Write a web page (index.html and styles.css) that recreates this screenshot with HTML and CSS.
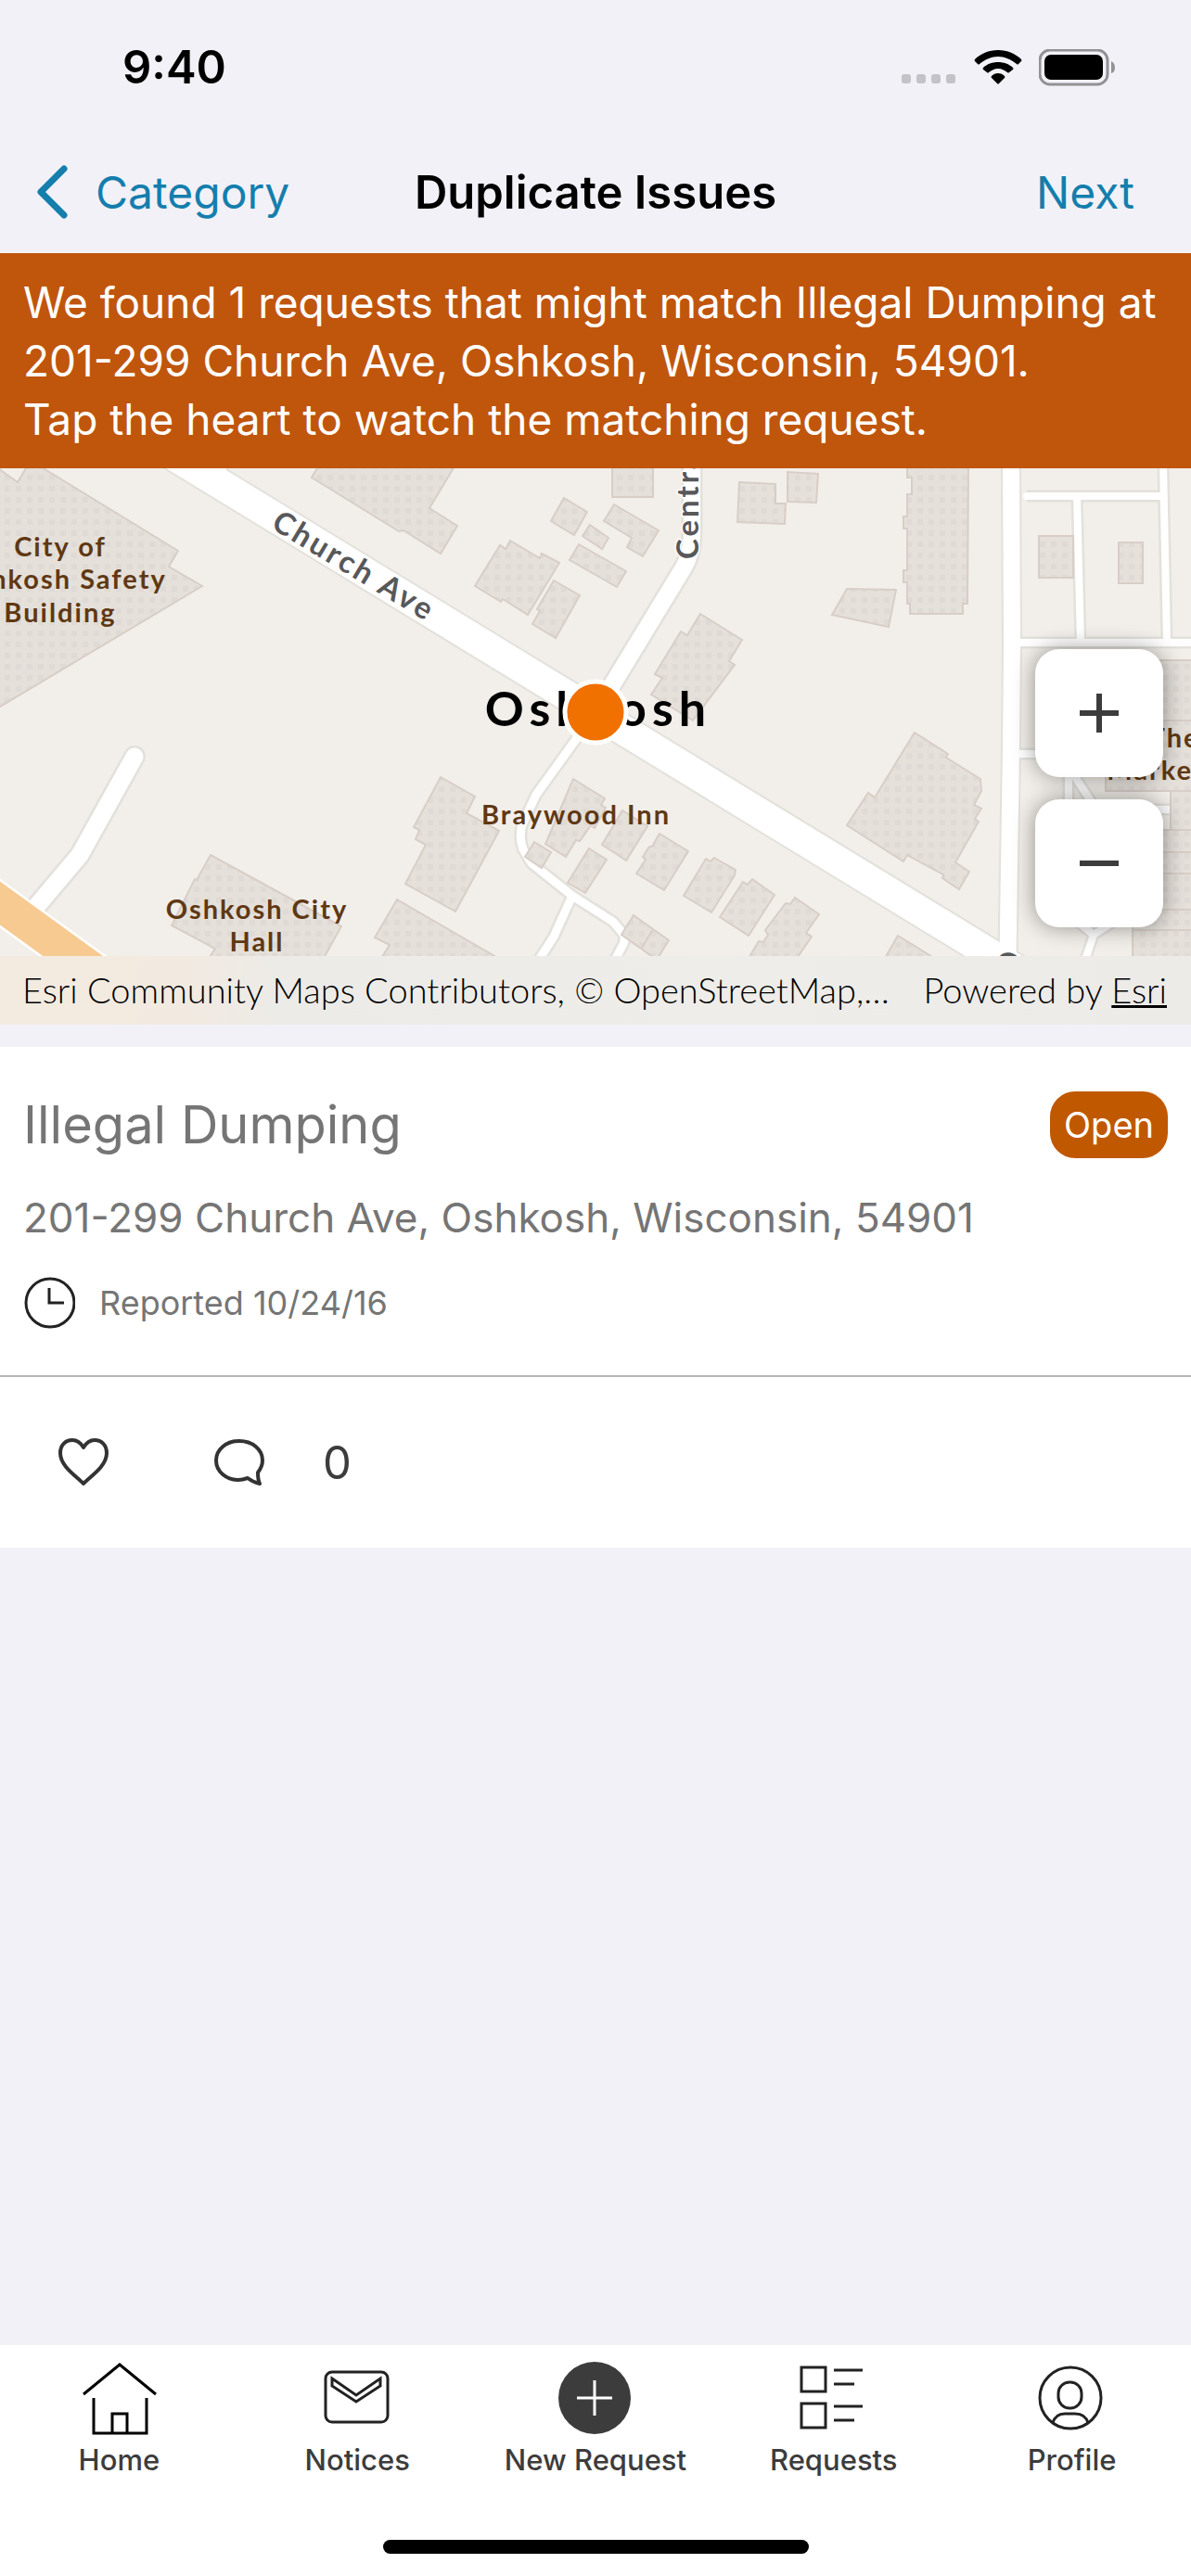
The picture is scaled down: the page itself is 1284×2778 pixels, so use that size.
FILE: index.html
```html
<!DOCTYPE html>
<html lang="en">
<head>
    <meta charset="UTF-8">
    <meta name="viewport" content="width=device-width, initial-scale=1.0">
    <title>Duplicate Issues</title>
    <link rel="stylesheet" href="styles.css">
</head>
<body>
    <div class="status-bar">
        <span class="time">9:40</span>
        <div class="status-icons">
            <svg width="60" height="12" viewBox="0 0 60 12" fill="#c3c3c7">
                <rect x="0" y="1" width="10" height="10" rx="3"/>
                <rect x="16" y="1" width="10" height="10" rx="3"/>
                <rect x="32" y="1" width="10" height="10" rx="3"/>
                <rect x="48" y="1" width="10" height="10" rx="3"/>
            </svg>
            <svg class="wifi" width="52" height="38" viewBox="0 0 52 38">
                <path d="M26 0C36 0 45 4 51 10Q52 11 51 12L48 15Q47 16 46 15C40 10 33 7 26 7S12 10 6 15Q5 16 4 15L1 12Q0 11 1 10C7 4 16 0 26 0Z"/>
                <path d="M26 13C32 13 38 15 42 19Q43 20 42 21L38 24Q37 25 36 24C33 22 30 20 26 20S19 22 16 24Q15 25 14 24L10 21Q9 20 10 19C14 15 20 13 26 13Z"/>
                <path d="M26 25C29 25 31 26 33 28Q34 29 33 30L27 36Q26 37 25 36L19 30Q18 29 19 28C21 26 23 25 26 25Z"/>
            </svg>
            <svg width="82" height="40" viewBox="0 0 82 40">
                <rect x="1" y="1" width="73" height="37" rx="11" fill="none" stroke="#929295" stroke-width="3"/>
                <rect x="6" y="6" width="63" height="27" rx="7"/>
                <path d="M78 13Q82 15 82 20T78 26Z" fill="#929295"/>
            </svg>
        </div>
    </div>

    <header class="nav-bar">
        <a class="back" href="#category">
            <svg width="34" height="58" viewBox="0 0 34 58" fill="none" stroke="#147ead" stroke-width="7" stroke-linecap="round" stroke-linejoin="round">
                <path d="M30 4L5 29L30 54"/>
            </svg>
            Category
        </a>
        <h1>Duplicate Issues</h1>
        <a class="next" href="#next">Next</a>
    </header>

    <div class="banner">
        <p>We found 1 requests that might match Illegal Dumping at 201-299 Church Ave, Oshkosh, Wisconsin, 54901.</p>
        <p>Tap the heart to watch the matching request.</p>
    </div>

    <section class="map">
        <svg class="map-canvas" viewBox="0 0 1284 600" preserveAspectRatio="xMidYMin slice">
            <defs>
                <pattern id="dots" width="12" height="12" patternUnits="userSpaceOnUse" x="5" y="7">
                    <rect width="12" height="12" fill="#e5e0da"/>
                    <rect width="6" height="6" fill="#dfdad5"/>
                </pattern>
            </defs>

            <!-- street casings -->
            <g class="casing">
                <path stroke-width="36" d="M100 -67L1150 574M228 14V-30"/>
                <path stroke-width="23" d="M746 -10V72Q745 94 737 107L650 250"/>
                <path stroke-width="14" d="M642 263L578 352L563 384Q559 398 564 411L573 426L617 461L661 489L672 502Q675 508 671 515L663 530M617 461L597 505L581 530"/>
                <path stroke-width="24" stroke-linecap="round" d="M145 311L86 417L38 474"/>
                <path stroke-width="22" d="M1090 -5L1091 190L1090 300L1086 560"/>
                <path stroke-width="13" d="M1107 30H1254M1161 30L1165 188M1254 -5L1258 188M1092 188H1290M1092 308H1152V368H1261M1154 325L1186 374M1150 480L1179 503L1215 480M1179 503L1170 530"/>
            </g>
            <!-- streets -->
            <g class="street">
                <path stroke-width="32" d="M100 -67L1150 574M228 14V-30"/>
                <path stroke-width="18" d="M746 -10V72Q745 94 737 107L650 250"/>
                <path stroke-width="9" d="M642 263L578 352L563 384Q559 398 564 411L573 426L617 461L661 489L672 502Q675 508 671 515L663 530M617 461L597 505L581 530"/>
                <path stroke-width="19" stroke-linecap="round" d="M145 311L86 417L38 474"/>
                <path stroke-width="18" d="M1090 -5L1091 190L1090 300L1086 560"/>
                <path stroke-width="8" stroke-linecap="round" d="M1107 30H1254M1161 30L1165 188M1254 -5L1258 188M1092 188H1290M1092 308H1152V368H1261M1154 325L1186 374M1150 480L1179 503L1215 480M1179 503L1170 530"/>
                <path stroke-width="43" d="M-40 440L120 556"/>
                <path class="highway" stroke-width="38" d="M-40 440L120 556"/>
            </g>

            <!-- buildings -->
            <g class="building">
                <path d="M-5 -2L19 15L28 0L40 -4L192 89L182 106L218 127L-5 260Z"/>
                <path d="M343 -2L336 10L430 68L435 67L475 92L493 62L463 43L490 -2Z"/>
                <path d="M608 32L633 47L619 72L594 57Z"/>
                <path d="M636 61L656 75L649 87L628 73Z"/>
                <path d="M662 39L710 67L693 95L676 85L681 75L651 57Z"/>
                <path d="M624 82L675 111L665 128L614 99Z"/>
                <path d="M550 78L582 97L584 92L603 102L569 158L542 141L540 144L512 127L539 83L545 87Z"/>
                <path d="M597 121L625 137L599 183L574 168L582 154L579 152Z"/>
                <path d="M660 -5H704V31H660Z"/>
                <path d="M797 15L836 17V38L847 38L846 60L795 58Z"/>
                <path d="M849 4L882 6L880 37L849 36Z"/>
                <path d="M755 157L800 185L786 208L792 212L747 272L702 244L714 226L706 222L734 176L741 180Z"/>
                <path d="M978 -5V10H983V28H978V52H974V65H978V110H974V123H978V146H981V157H1038V146H1043L1044 -5Z"/>
                <path d="M913 130L966 131L958 171L897 158Z"/>
                <path d="M1120 73H1157V118H1120Z"/>
                <path d="M1206 80H1232V124H1206Z"/>
                <path d="M986 285L1022 308L1020 312L1057 335L1058 348L1050 363L1058 367L1051 378L1055 381L1030 425L1045 435L1034 454L1016 442L1017 438L978 417L974 424L913 385L936 350L943 355Z"/>
                <path d="M857 463L883 481L869 501L875 505L858 530H806L818 510L823 511L828 503L825 498L847 469L852 470Z"/>
                <path d="M968 504L1010 530H953Z"/>
                <path d="M475 333L512 354L503 372L538 391L491 478L437 448L459 406L448 400L452 390L446 387Z"/>
                <path d="M618 335L652 356L648 363L653 366L641 388L637 385L625 402L621 401L610 419L588 405Z"/>
                <path d="M671 369L698 386L675 423L663 415L649 406Z"/>
                <path d="M711 394L742 413L716 455L686 437L696 422L693 419L700 408L703 408Z"/>
                <path d="M770 420L793 433L792 439L767 479L737 461L761 421L766 424Z"/>
                <path d="M811 443L835 460L807 504L776 484L801 446L806 449Z"/>
                <path d="M576 403L594 414L584 431L566 419Z"/>
                <path d="M635 410L654 422L631 458L612 447Z"/>
                <path d="M683 482L721 509L708 530L670 503ZM704 497L692 517"/>
                <path d="M428 465L540 530H410L420 514L404 506Z"/>
                <path d="M227 417L368 494L348 530H224L232 518L185 493L210 443L212 444Z"/>
                <path d="M1192 207H1290V348H1192ZM1192 272H1290"/>
                <path d="M1262 348H1290V390H1262Z"/>
                <path d="M1221 390H1290V530H1221ZM1221 414H1290M1221 437H1290M1221 476H1290M1221 498H1290"/>
            </g>

            <!-- labels -->
            <g class="place" text-anchor="middle">
                <text x="65" y="95">City of</text>
                <text x="65" y="130">Oshkosh Safety</text>
                <text x="65" y="166">Building</text>
                <text x="621" y="384">Braywood Inn</text>
                <text x="277" y="486">Oshkosh City</text>
                <text x="277" y="521">Hall</text>
                <text x="1266" y="301">The</text>
                <text x="1246" y="336">Market</text>
            </g>
            <g class="road-name">
                <text transform="translate(291 64) rotate(31)">Church Ave</text>
                <text transform="translate(753 98) rotate(-90)">Central Ave</text>
                <text transform="translate(1075 521) rotate(90)">C</text>
            </g>
            <text class="city" x="645" y="278" text-anchor="middle">Oshkosh</text>
            <circle cx="642" cy="263" r="33" fill="#f07000" stroke="#fff" stroke-width="5"/>
        </svg>

        <div class="zoom-controls">
            <button type="button" aria-label="Zoom in">
                <svg width="42" height="42" viewBox="0 0 42 42" fill="#3c3c3c"><path d="M18 0H24V18H42V24H24V42H18V24H0V18H18Z"/></svg>
            </button>
            <button type="button" aria-label="Zoom out">
                <svg width="42" height="42" viewBox="0 0 42 42" fill="#3c3c3c"><path d="M0 18H42V24H0Z"/></svg>
            </button>
        </div>

        <div class="attribution">
            <span>Esri Community Maps Contributors, © OpenStreetMap,…</span>
            <span>Powered by <a href="#esri">Esri</a></span>
        </div>
    </section>

    <article class="card">
        <div class="card-body">
            <div class="card-title">
                <h2>Illegal Dumping</h2>
                <span class="badge">Open</span>
            </div>
            <p class="address">201-299 Church Ave, Oshkosh, Wisconsin, 54901</p>
            <p class="reported">
                <svg width="56" height="56" viewBox="0 0 56 56" fill="none" stroke="#222" stroke-width="3">
                    <circle cx="29" cy="28" r="26"/>
                    <path d="M28 12V28H44"/>
                </svg>
                Reported 10/24/16
            </p>
        </div>
        <div class="card-actions">
            <button type="button" aria-label="Watch request">
                <svg width="56" height="56" viewBox="0 0 56 56" fill="none" stroke="#333" stroke-width="4" stroke-linejoin="round">
                    <path d="M28 51C22 44 3 33 3 18C3 9 9 4 16 4C21 4 25 7 28 12C31 7 35 4 40 4C47 4 53 9 53 18C53 33 34 44 28 51Z"/>
                </svg>
            </button>
            <button type="button" class="comments">
                <svg width="56" height="56" viewBox="0 0 56 56" fill="none" stroke="#333" stroke-width="4" stroke-linejoin="round">
                    <path d="M28 5C14 5 3 14 3 26S14 47 27 47C31 47 34 46 37 45C41 48 45 50 50 51C48 47 48 43 48 39C51 35 53 31 53 26C53 14 42 5 28 5Z"/>
                </svg>
                <span>0</span>
            </button>
        </div>
    </article>

    <nav class="tab-bar">
        <div class="tabs">
            <a href="#home">
                <svg width="84" height="84" viewBox="0 0 84 84" fill="none" stroke="#000" stroke-width="3">
                    <path d="M4 38L43 6L82 38M15 42V80H72V42M35 80V59H51V80"/>
                </svg>
                Home
            </a>
            <a href="#notices">
                <svg width="84" height="84" viewBox="0 0 84 84" fill="none" stroke="#222" stroke-width="3">
                    <rect x="8" y="14" width="67" height="54" rx="7"/>
                    <path d="M15 21L41 39L67 21V29L41 46L15 29Z"/>
                </svg>
                Notices
            </a>
            <a href="#new">
                <svg width="84" height="84" viewBox="0 0 84 84" fill="none">
                    <circle cx="41" cy="42" r="39" fill="#3c3c3c"/>
                    <path d="M22 42H60M41 23V61" stroke="#fff" stroke-width="3"/>
                </svg>
                New Request
            </a>
            <a href="#requests">
                <svg width="84" height="84" viewBox="0 0 84 84" fill="none" stroke="#222" stroke-width="3">
                    <path d="M7 9H33V35H7ZM7 48H33V74H7ZM42 12H73M42 27H64M42 51H73M42 66H64"/>
                </svg>
                Requests
            </a>
            <a href="#profile">
                <svg width="84" height="84" viewBox="0 0 84 84" fill="none" stroke="#222" stroke-width="3">
                    <circle cx="40" cy="42" r="33"/>
                    <rect x="27" y="25" width="25" height="28" rx="12"/>
                    <path d="M21 69C23 62 28 59 34 59H45C52 59 57 62 59 69"/>
                </svg>
                Profile
            </a>
        </div>
        <div class="home-indicator"></div>
    </nav>
</body>
</html>
```
FILE: styles.css
```css
* {
    box-sizing: border-box;
}

body {
    display: flex;
    flex-direction: column;
    min-height: 100vh;
    margin: 0;
    background-color: #f2f1f7;
    font-family: Inter, "Liberation Sans", sans-serif;
    color: #000;
}

h1, h2, p {
    margin: 0;
    font-weight: normal;
}

a {
    color: inherit;
    text-decoration: none;
}

button {
    padding: 0;
    border: none;
    background: none;
    font: inherit;
    color: inherit;
    cursor: pointer;
}

svg {
    display: block;
    flex-shrink: 0;
}

.status-bar {
    display: flex;
    justify-content: space-between;
    align-items: center;
    height: 141px;
    padding: 4px 82px 0 132px;
}

.time {
    font-size: 49px;
    font-weight: 600;
}

.status-icons {
    display: flex;
    align-items: center;
    gap: 18px;
}

.status-icons svg:first-child {
    margin-top: 24px;
}

.nav-bar {
    display: grid;
    grid-template-columns: 1fr auto 1fr;
    align-items: center;
    height: 132px;
    padding: 0 61px 0 39px;
    font-size: 48px;
}

.nav-bar h1 {
    margin-left: 22px;
    font-size: 49px;
    font-weight: 600;
}

.back, .next {
    color: #147ead;
}

.back {
    display: flex;
    align-items: center;
    gap: 30px;
}

.next {
    text-align: right;
}

.banner {
    padding: 22px 25px 21px;
    background-color: #c0550c;
    color: #fff;
    font-size: 46px;
    line-height: 63px;
}

.map {
    position: relative;
    display: flex;
    flex-direction: column;
    justify-content: flex-end;
    height: 600px;
    background-color: #f2efea;
    overflow: hidden;
}

.map-canvas {
    position: absolute;
    top: 0;
    left: 0;
    width: 100%;
    height: 600px;
}

.casing, .street {
    fill: none;
    stroke-linejoin: round;
}

.casing {
    stroke: #e3e1db;
}

.street {
    stroke: #fff;
}

.street .highway {
    stroke: #f7ca91;
}

.building {
    fill: url(#dots);
    stroke: #d8cec7;
    stroke-width: 2;
}

.map-canvas text {
    font-family: Lato, "Open Sans", sans-serif;
    font-weight: bold;
}

.place text {
    font-size: 29px;
    letter-spacing: 2px;
    fill: #5f3813;
}

.road-name text {
    font-size: 33px;
    letter-spacing: 3px;
    fill: #58585a;
    stroke: #fff;
    stroke-width: 3;
    paint-order: stroke;
}

.map-canvas .city {
    font-size: 52px;
    letter-spacing: 6px;
}

.zoom-controls {
    position: relative;
    align-self: flex-end;
    display: flex;
    flex-direction: column;
    gap: 24px;
    margin: 0 30px 31px 0;
}

.zoom-controls button {
    display: flex;
    justify-content: center;
    align-items: center;
    width: 138px;
    height: 138px;
    border-radius: 26px;
    background-color: #fff;
    box-shadow: 0 0 24px rgba(0, 0, 0, 0.4);
}

.attribution {
    position: relative;
    display: flex;
    justify-content: space-between;
    align-items: center;
    height: 74px;
    padding: 0 26px 2px 24px;
    background: linear-gradient(90deg, #f4ebe0 0, #f2eae0 15%, #ecebe8 24%, #eeede9 60%, #ecebe8 100%);
    font-family: Lato, "Open Sans", sans-serif;
    font-size: 38px;
    font-weight: 300;
    white-space: nowrap;
}

.attribution a {
    text-decoration: underline;
}

.card {
    margin-top: 24px;
    background-color: #fff;
    color: #757575;
}

.card-body {
    display: flex;
    flex-direction: column;
    padding: 48px 25px 50px;
    border-bottom: 2px solid #b5b5b5;
}

.card-title {
    display: flex;
    justify-content: space-between;
    align-items: center;
}

.card-title h2 {
    font-size: 56px;
    line-height: 72px;
}

.badge {
    padding: 0 15px;
    border-radius: 27px;
    background-color: #c05800;
    color: #fff;
    font-size: 38px;
    line-height: 72px;
}

.address {
    margin-top: 36px;
    font-size: 44px;
    line-height: 56px;
}

.reported {
    display: flex;
    align-items: center;
    gap: 26px;
    margin-top: 36px;
    font-size: 36px;
    line-height: 56px;
}

.card-actions {
    display: flex;
    align-items: center;
    gap: 112px;
    height: 184px;
    padding: 0 62px;
    color: #3c3c3c;
    font-size: 49px;
}

.comments {
    display: flex;
    align-items: center;
    gap: 62px;
}

.tab-bar {
    display: flex;
    flex-direction: column;
    justify-content: space-between;
    height: 249px;
    margin-top: auto;
    padding: 15px 0 24px;
    background-color: #fff;
}

.tabs {
    display: grid;
    grid-template-columns: repeat(5, 1fr);
}

.tabs a {
    display: flex;
    flex-direction: column;
    align-items: center;
    gap: 7px;
    color: #3c3c3c;
    font-size: 31px;
    font-weight: 500;
    line-height: 36px;
}

.home-indicator {
    align-self: center;
    width: 459px;
    height: 15px;
    border-radius: 8px;
    background-color: #000;
}
```
